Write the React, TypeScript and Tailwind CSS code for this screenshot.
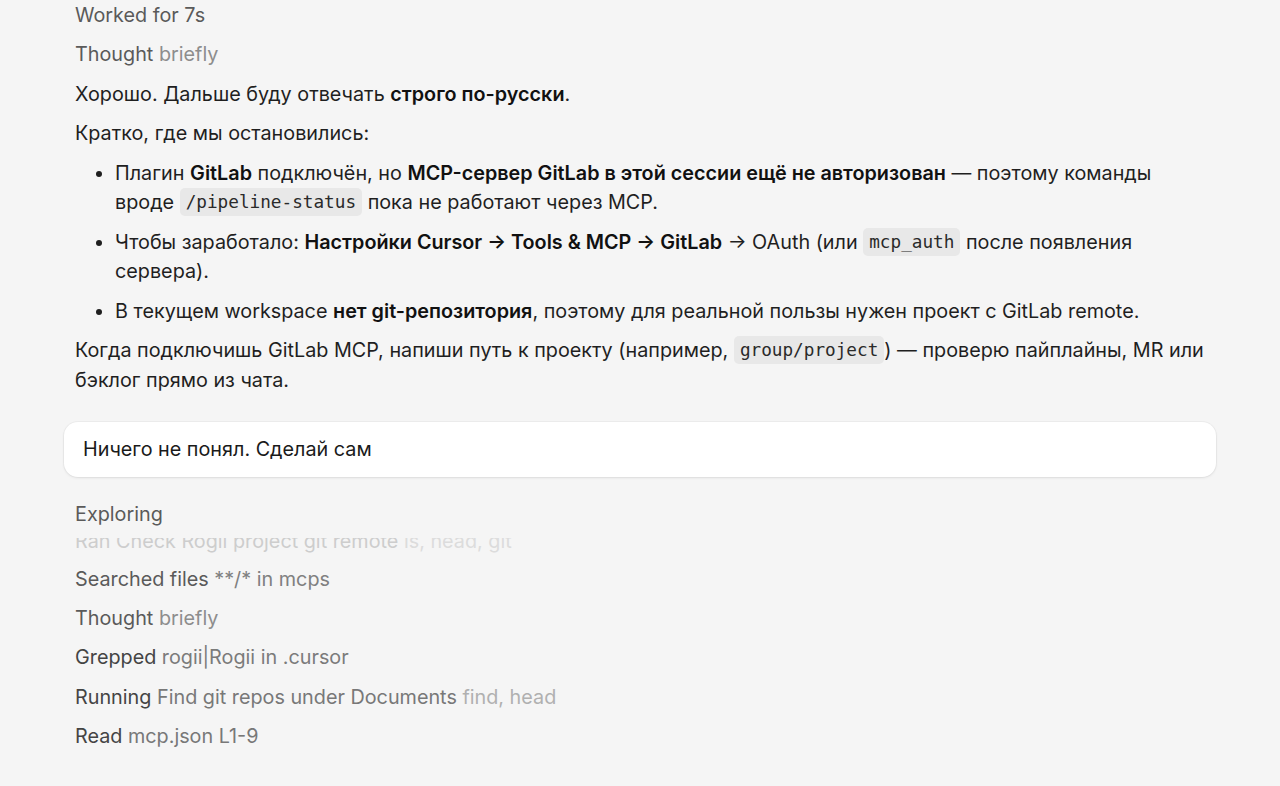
import React from "react";

const Code = ({ children }: { children: React.ReactNode }) => (
  <code className="rounded-[5px] bg-[#e8e8e8] px-[6px] py-[4px] align-[1px] font-['DejaVu_Sans_Mono',monospace] text-[17.7px] leading-[1] text-[#2a2a2a]">
    {children}
  </code>
);

const B = ({ children }: { children: React.ReactNode }) => (
  <b className="font-semibold text-[#111]">{children}</b>
);

export default function App() {
  return (
    <div className="min-h-[786px] w-full overflow-hidden bg-[#f5f5f5] pt-[1px] font-['Inter','Noto_Sans',sans-serif] text-[19.8px] leading-[29.6px] text-[#1f1f1f]">
      <div className="ml-[64px] w-[1152px]">
        <div className="flex flex-col gap-[9.8px] px-[11px]">
          <div className="text-[#5a5a5a]">Worked for 7s</div>
          <div className="text-[#5a5a5a]">
            Thought <span className="text-[#8d8d8d]">briefly</span>
          </div>
          <p>
            Хорошо. Дальше буду отвечать <B>строго по-русски</B>.
          </p>
          <p>Кратко, где мы остановились:</p>
          <ul className="flex flex-col gap-[9.8px] pl-[40px] pr-[20px]">
            <li className="list-disc marker:text-[#1f1f1f]">
              Плагин <B>GitLab</B> подключён, но <B>MCP-сервер GitLab в этой сессии ещё не авторизован</B> — поэтому команды вроде <Code>/pipeline-status</Code> пока не работают через MCP.
            </li>
            <li className="list-disc">
              Чтобы заработало: <B>Настройки Cursor → Tools &amp; MCP → GitLab</B> → OAuth (или <Code>mcp_auth</Code> после появления сервера).
            </li>
            <li className="list-disc">
              В текущем workspace <B>нет git-репозитория</B>, поэтому для реальной пользы нужен проект с GitLab remote.
            </li>
          </ul>
          <p>
            Когда подключишь GitLab MCP, напиши путь к проекту (например, <Code>group/project</Code>) — проверю пайплайны, MR или бэклог прямо из чата.
          </p>
        </div>

        <div className="mt-[27px] flex h-[55px] items-center rounded-[14px] bg-white px-[19px] text-[#1a1a1a] shadow-[0_1px_3px_rgba(0,0,0,0.08),0_0_0_1px_rgba(0,0,0,0.03)]">
          Ничего не понял. Сделай сам
        </div>

        <div className="mt-[23px] px-[11px] text-[#5a5a5a]">
          <div>Exploring</div>
          <div className="relative mt-[8px] h-[18px] overflow-hidden">
            <div className="-mt-[11px] text-[#cdcdcd]">
              Ran Check Rogii project git remote <span className="text-[#dcdcdc]">ls, head, git</span>
            </div>
          </div>
          <div className="mt-[9px] flex flex-col gap-[9.8px]">
            <div>
              Searched files <span className="text-[#808080]">**/* in mcps</span>
            </div>
            <div>
              Thought <span className="text-[#8d8d8d]">briefly</span>
            </div>
            <div className="text-[#444]">
              Grepped <span className="text-[#7b7b7b]">rogii|Rogii in .cursor</span>
            </div>
            <div className="text-[#444]">
              Running <span className="text-[#787878]">Find git repos under Documents</span>{" "}
              <span className="text-[#b0b0b0]">find, head</span>
            </div>
            <div className="text-[#444]">
              Read <span className="text-[#787878]">mcp.json L1-9</span>
            </div>
          </div>
        </div>
      </div>
    </div>
  );
}
